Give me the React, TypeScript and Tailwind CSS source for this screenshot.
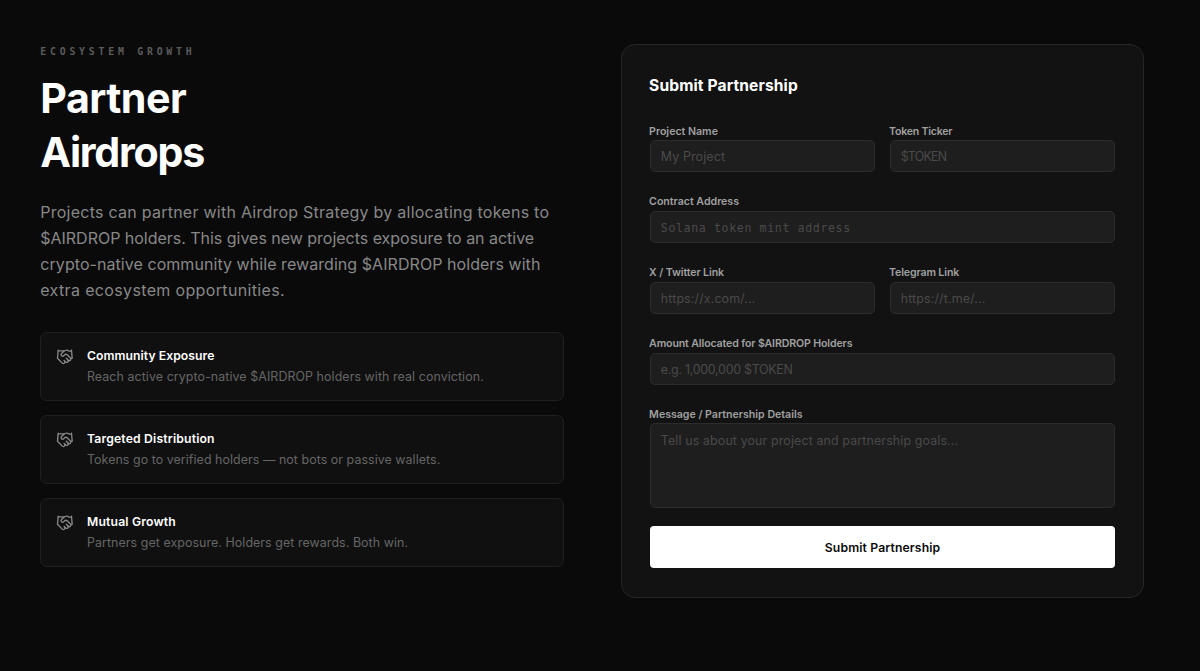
import { Handshake } from "lucide-react";
import type { ReactNode } from "react";

const benefits = [
  {
    title: "Community Exposure",
    titleClass: "tracking-[0.05px]",
    text: "Reach active crypto-native $AIRDROP holders with real conviction.",
    textClass: "tracking-[0.09px]",
  },
  {
    title: "Targeted Distribution",
    titleClass: "tracking-[0.17px]",
    text: "Tokens go to verified holders — not bots or passive wallets.",
    textClass: "tracking-[0.07px]",
  },
  {
    title: "Mutual Growth",
    titleClass: "tracking-[0.18px]",
    text: "Partners get exposure. Holders get rewards. Both win.",
    textClass: "tracking-[0.08px]",
  },
];

const control =
  "block w-full rounded-[5px] border border-[#2c2c2c] bg-[#1e1e1e] px-[10px] text-white outline-none placeholder:text-[#4a4a4a] placeholder:opacity-100";

function Field({ label, className, children }: { label: string; className?: string; children: ReactNode }) {
  return (
    <label className="block min-w-0 flex-1">
      <span className="-ml-[0.7px] flex h-[15.75px] items-start whitespace-nowrap text-[10.6px] leading-[13px] font-semibold text-[#a0a0a0]">
        <span className={className}>{label}</span>
      </span>
      {children}
    </label>
  );
}

export default function App() {
  return (
    <main className="flex h-[671px] w-[1200px] items-start gap-[56.5px] overflow-hidden bg-[#0a0a0a] pt-[44px] pl-[40.3px] font-['Inter',sans-serif]">
      <section className="w-[524px] shrink-0">
        <p className="h-[15px] whitespace-nowrap font-['DejaVu_Sans_Mono',monospace] text-[9.8px] leading-[15px] font-bold tracking-[3.8px] text-[#5c5c5c]">
          ECOSYSTEM GROWTH
        </p>
        <h1 className="mt-[13.4px] text-[41.2px] leading-[53.2px] font-bold text-white">
          <span className="block tracking-[-0.55px]">Partner</span>
          <span className="block tracking-[-1.25px]">Airdrops</span>
        </h1>
        <p className="mt-[21.4px] whitespace-nowrap text-[16px] leading-[25.8px] text-[#888]">
          <span className="block tracking-[0.25px]">Projects can partner with Airdrop Strategy by allocating tokens to</span>
          <span className="block tracking-[-0.02px]">$AIRDROP holders. This gives new projects exposure to an active</span>
          <span className="block tracking-[0.06px]">crypto-native community while rewarding $AIRDROP holders with</span>
          <span className="block tracking-[0.35px]">extra ecosystem opportunities.</span>
        </p>
        <ul className="mt-[28.6px] flex flex-col gap-[14px]">
          {benefits.map((b) => (
            <li key={b.title} className="flex h-[69px] gap-[13.4px] rounded-[7px] border border-[#202020] bg-[#101010] pt-[13px] pl-[14.6px]">
              <Handshake className="mt-[2px] size-[17.7px] shrink-0 text-[#888]" strokeWidth={1.8} />
              <div className="whitespace-nowrap">
                <h2 className="text-[12.2px] leading-[19px] font-semibold text-white">
                  <span className={b.titleClass}>{b.title}</span>
                </h2>
                <p className="mt-[3.3px] text-[12.4px] leading-[18px] text-[#666]">
                  <span className={b.textClass}>{b.text}</span>
                </p>
              </div>
            </li>
          ))}
        </ul>
      </section>

      <form className="h-[554px] w-[523.5px] shrink-0 rounded-[14px] border border-[#262626] bg-[#121212] px-[28px] pt-[28px]" onSubmit={(e) => e.preventDefault()}>
        <h2 className="-ml-[0.7px] text-[15.6px] leading-[25px] font-bold text-white">
          <span className="tracking-[0.11px]">Submit Partnership</span>
        </h2>
        <div className="mt-[26.5px] flex flex-col gap-[23px]">
          <div className="flex gap-[14.2px]">
            <Field label="Project Name">
              <input className={`${control} h-[32px] pt-[1px] text-[12.4px] tracking-[0.15px]`} placeholder="My Project" />
            </Field>
            <Field label="Token Ticker" className="tracking-[-0.22px]">
              <input className={`${control} h-[32px] pt-[1px] text-[12.4px] tracking-[-0.75px]`} placeholder="$TOKEN" />
            </Field>
          </div>
          <Field label="Contract Address">
            <input
              className={`${control} h-[32px] pt-[1px] font-['DejaVu_Sans_Mono',monospace] text-[11.6px] tracking-[0.62px]`}
              placeholder="Solana token mint address"
            />
          </Field>
          <div className="flex gap-[14.2px]">
            <Field label="X / Twitter Link" className="tracking-[-0.1px]">
              <input className={`${control} h-[32px] pt-[1px] text-[12.4px] tracking-[0.15px]`} placeholder="https://x.com/..." />
            </Field>
            <Field label="Telegram Link" className="tracking-[-0.12px]">
              <input className={`${control} h-[32px] pt-[1px] text-[12.4px] tracking-[0.17px]`} placeholder="https://t.me/..." />
            </Field>
          </div>
          <Field label="Amount Allocated for $AIRDROP Holders" className="tracking-[-0.13px]">
            <input className={`${control} h-[32px] pt-[1px] text-[12.4px] tracking-[-0.26px]`} placeholder="e.g. 1,000,000 $TOKEN" />
          </Field>
          <Field label="Message / Partnership Details">
            <textarea
              className={`${control} h-[85px] resize-none py-[8px] text-[12.4px] leading-[18px] tracking-[0.14px]`}
              placeholder="Tell us about your project and partnership goals..."
            />
          </Field>
        </div>
        <button className="mt-[17.7px] block h-[42.5px] w-full rounded-[4px] bg-white pt-[1px] text-[12.2px] font-semibold text-[#0a0a0a]">
          <span className="tracking-[0.14px]">Submit Partnership</span>
        </button>
      </form>
    </main>
  );
}
